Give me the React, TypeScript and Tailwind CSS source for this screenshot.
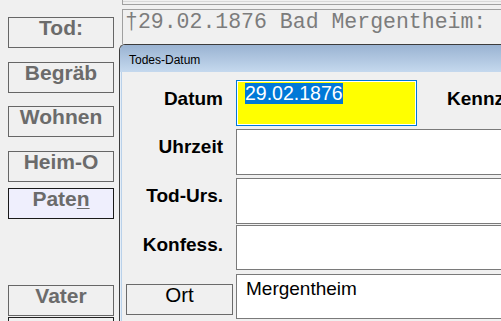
import React from 'react';

const sideButtons = [
  { label: 'Tod:', mt: 'mt-0' },
  { label: 'Begräb', mt: 'mt-[14px]' },
  { label: 'Wohnen', mt: 'mt-[13px]' },
  { label: 'Heim-O', mt: 'mt-[14px]' },
];

function SideButton({ children, className = '' }: { children: React.ReactNode; className?: string }) {
  return (
    <div
      className={`ml-[8px] h-[31px] w-[106px] shrink-0 border flex items-start justify-center text-[21px] leading-[20px] font-bold text-[#6b6b6b] ${className}`}
    >
      {children}
    </div>
  );
}

function Row({
  label,
  labelPad,
  className = '',
  children,
}: {
  label: React.ReactNode;
  labelPad: string;
  className?: string;
  children: React.ReactNode;
}) {
  return (
    <div className={`flex h-[46px] ${className}`}>
      <div className={`w-[114px] shrink-0 flex items-center justify-end pr-[13px] text-[19px] font-bold text-black ${labelPad}`}>
        {label}
      </div>
      {children}
    </div>
  );
}

export default function App() {
  return (
    <div
      className="w-[501px] h-[321px] overflow-hidden bg-[#f0f0f0] flex"
      style={{ fontFamily: '"Liberation Sans", Arial, sans-serif' }}
    >
      {/* left button column */}
      <div className="w-[119px] shrink-0 flex flex-col pt-[17px]">
        {sideButtons.map((b) => (
          <SideButton key={b.label} className={`border-[#666] ${b.mt}`}>
            {b.label}
          </SideButton>
        ))}
        <SideButton className="mt-[6px] border-[#1a1a1a] bg-[#efeffd]">
          <span>
            Pate<span className="underline underline-offset-[2px] decoration-1">n</span>
          </span>
        </SideButton>
        <SideButton className="mt-[66px] border-[#666]">Vater</SideButton>
        <SideButton className="mt-[1px] border-[#222]">{''}</SideButton>
      </div>

      {/* right: underlying fields + dialog */}
      <div className="flex-1 min-w-0 flex flex-col">
        <div className="ml-[3px] h-[5px] shrink-0 border-l border-b border-[#a0a0a0] bg-[#f0f0f0]">
          <div className="mt-[1px] h-px bg-[#d8d8d8]" />
        </div>
        <div
          className="ml-[3px] mt-[4px] h-[35px] shrink-0 border-l border-t border-[#a0a0a0] pl-[2px] text-[21.5px] leading-[24px] text-[#7c7c7c] whitespace-nowrap overflow-hidden"
          style={{ fontFamily: '"Liberation Mono", "Courier New", monospace' }}
        >
          †29.02.1876 Bad Mergentheim:
        </div>

        {/* dialog window */}
        <div className="flex-1 flex flex-col border-t border-l border-[#3c3c3c] rounded-tl-[6px] overflow-hidden">
          <div className="h-[27px] shrink-0 bg-gradient-to-b from-[#9ab3d2] to-[#c5d9ee] flex items-center pl-[9px] pt-[2px] text-[12px] text-black">
            Todes-Datum
          </div>
          <div className="flex-1 flex border-l border-[#e4edf7]">
            <div className="w-px shrink-0 bg-[#b9d1ea]" />
            <div className="flex-1 flex flex-col pt-[8px] bg-[#f0f0f0]">
              <Row label="Datum" labelPad="pb-[7px]">
                <div className="w-[181px] shrink-0 border border-[#0078d7] bg-white p-px">
                  <div className="h-full bg-[#ffff00] pl-[7px] pt-px">
                    <span className="inline-block h-[21px] bg-[#0078d7] text-white text-[19.5px] leading-[21px]">
                      29.02.1876
                    </span>
                  </div>
                </div>
                <div className="ml-[30px] flex items-center pb-[7px] text-[19px] font-bold text-black whitespace-nowrap">
                  Kennz
                </div>
              </Row>
              <Row label="Uhrzeit" labelPad="pb-[9px]" className="mt-[3px]">
                <div className="flex-1 border border-r-0 border-[#7a7a7a] bg-white" />
              </Row>
              <Row label="Tod-Urs." labelPad="pb-[9px]" className="mt-[3px]">
                <div className="flex-1 border border-r-0 border-[#7a7a7a] bg-white" />
              </Row>
              <Row label="Konfess." labelPad="pb-[4px]" className="mt-[1px] !h-[45px]">
                <div className="flex-1 border border-r-0 border-[#7a7a7a] bg-white" />
              </Row>
              <div className="flex h-[45px] mt-[4px]">
                <div className="w-[114px] shrink-0 flex items-start pt-[10px]">
                  <div className="ml-[4px] h-[31px] w-[107px] border border-[#6a6a6a] flex items-start justify-center text-[20.5px] leading-[20px] text-black">
                    Ort
                  </div>
                </div>
                <div className="flex-1 border border-r-0 border-[#7a7a7a] bg-white pl-[9px] pt-[3px] text-[19px] leading-[21px] text-black">
                  Mergentheim
                </div>
              </div>
            </div>
          </div>
        </div>
      </div>
    </div>
  );
}
